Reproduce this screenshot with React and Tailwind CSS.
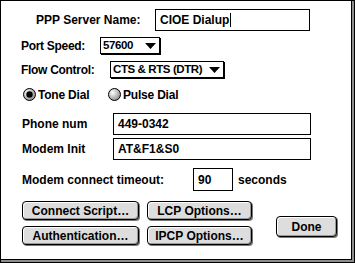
import React from 'react';

const font = { fontFamily: '"Liberation Sans", Arial, sans-serif' };

function Field({ width, height = 22, children }) {
    return (
        <div
            className="border border-black bg-white flex items-center pl-[4px] text-[12px] font-bold text-black whitespace-nowrap"
            style={{ width, height }}
        >
            {children}
        </div>
    );
}

function Popup({ width, label }) {
    return (
        <div
            className="h-[17px] border border-black bg-white flex items-center justify-between pl-[2px] pr-[3px] text-[11.5px] font-bold tracking-[-0.4px] whitespace-nowrap shadow-[1px_1px_0_#000]"
            style={{ width }}
        >
            <span>{label}</span>
            <svg width="11" height="6" viewBox="0 0 11 6" className="shrink-0">
                <polygon points="0,0 11,0 5.5,6" fill="#000" />
            </svg>
        </div>
    );
}

function Radio({ checked, label }) {
    const id = checked ? 'rg1' : 'rg2';
    return (
        <div className="flex items-center gap-[2px]">
            <svg width="13" height="13" viewBox="0 0 13 13">
                <defs>
                    <radialGradient id={id} cx="35%" cy="35%" r="70%">
                        <stop offset="0%" stopColor="#ffffff" />
                        <stop offset="100%" stopColor="#8a8a8a" />
                    </radialGradient>
                </defs>
                <circle cx="6.5" cy="6.5" r="6" fill={`url(#${id})`} stroke="#000" strokeWidth="1" />
                {checked && <circle cx="6.5" cy="6.5" r="3.2" fill="#000" />}
            </svg>
            <span className="text-[12px] font-bold tracking-[-0.2px]">{label}</span>
        </div>
    );
}

function Button({ width, height = 19, children }) {
    return (
        <div
            className="border border-black rounded-[4px] bg-[#dddddd] flex items-center justify-center text-[12px] font-bold whitespace-nowrap shadow-[inset_1px_1px_0_#ffffff,inset_-1px_-1px_0_#999999,1px_1px_0_#777777]"
            style={{ width, height }}
        >
            {children}
        </div>
    );
}

export default function App() {
    return (
        <div className="w-[355px] h-[263px] bg-black p-px text-black" style={font}>
            <div className="bg-[#8c8c8c] pr-[2px] pb-[2px]">
                <div className="bg-black pr-px pb-px">
                    <div className="w-[350px] h-[258px] bg-white flex flex-col">
                        <div className="mt-[8px] pl-[35px] h-[22px] flex items-center">
                            <div className="w-[119px] text-[12px] font-bold">PPP Server Name:</div>
                            <Field width={155}>
                                <span>CIOE Dialup</span>
                                <span className="w-px h-[14px] bg-black ml-[1px]"></span>
                            </Field>
                        </div>

                        <div className="mt-[6px] pl-[20px] h-[17px] flex items-center">
                            <div className="w-[79px] text-[12px] font-bold tracking-[-0.3px]">Port Speed:</div>
                            <Popup width={60} label="57600" />
                        </div>

                        <div className="mt-[7px] pl-[20px] h-[17px] flex items-center">
                            <div className="w-[89px] text-[12px] font-bold tracking-[-0.3px]">Flow Control:</div>
                            <Popup width={114} label="CTS & RTS (DTR)" />
                        </div>

                        <div className="mt-[10px] pl-[22px] h-[13px] flex items-center">
                            <div className="w-[85px]">
                                <Radio checked label="Tone Dial" />
                            </div>
                            <Radio label="Pulse Dial" />
                        </div>

                        <div className="mt-[12px] pl-[21px] h-[22px] flex items-center">
                            <div className="w-[91px] text-[12px] font-bold">Phone num</div>
                            <Field width={198}>449-0342</Field>
                        </div>

                        <div className="mt-[3px] pl-[21px] h-[22px] flex items-center">
                            <div className="w-[91px] text-[12px] font-bold">Modem Init</div>
                            <Field width={198}>AT&amp;F1&amp;S0</Field>
                        </div>

                        <div className="mt-[8px] pl-[21px] h-[23px] flex items-center">
                            <div className="w-[171px] text-[12px] font-bold">Modem connect timeout:</div>
                            <Field width={40} height={23}>90</Field>
                            <div className="ml-[5px] text-[12px] font-bold">seconds</div>
                        </div>

                        <div className="mt-[10px] pl-[21px] flex">
                            <div className="flex flex-col gap-[6px]">
                                <Button width={117}>Connect Script…</Button>
                                <Button width={117}>Authentication…</Button>
                            </div>
                            <div className="ml-[8px] flex flex-col gap-[6px]">
                                <Button width={105}>LCP Options…</Button>
                                <Button width={105}>IPCP Options…</Button>
                            </div>
                            <div className="ml-[24px] mt-[15px]">
                                <Button width={61} height={21}>Done</Button>
                            </div>
                        </div>
                    </div>
                </div>
            </div>
        </div>
    );
}
